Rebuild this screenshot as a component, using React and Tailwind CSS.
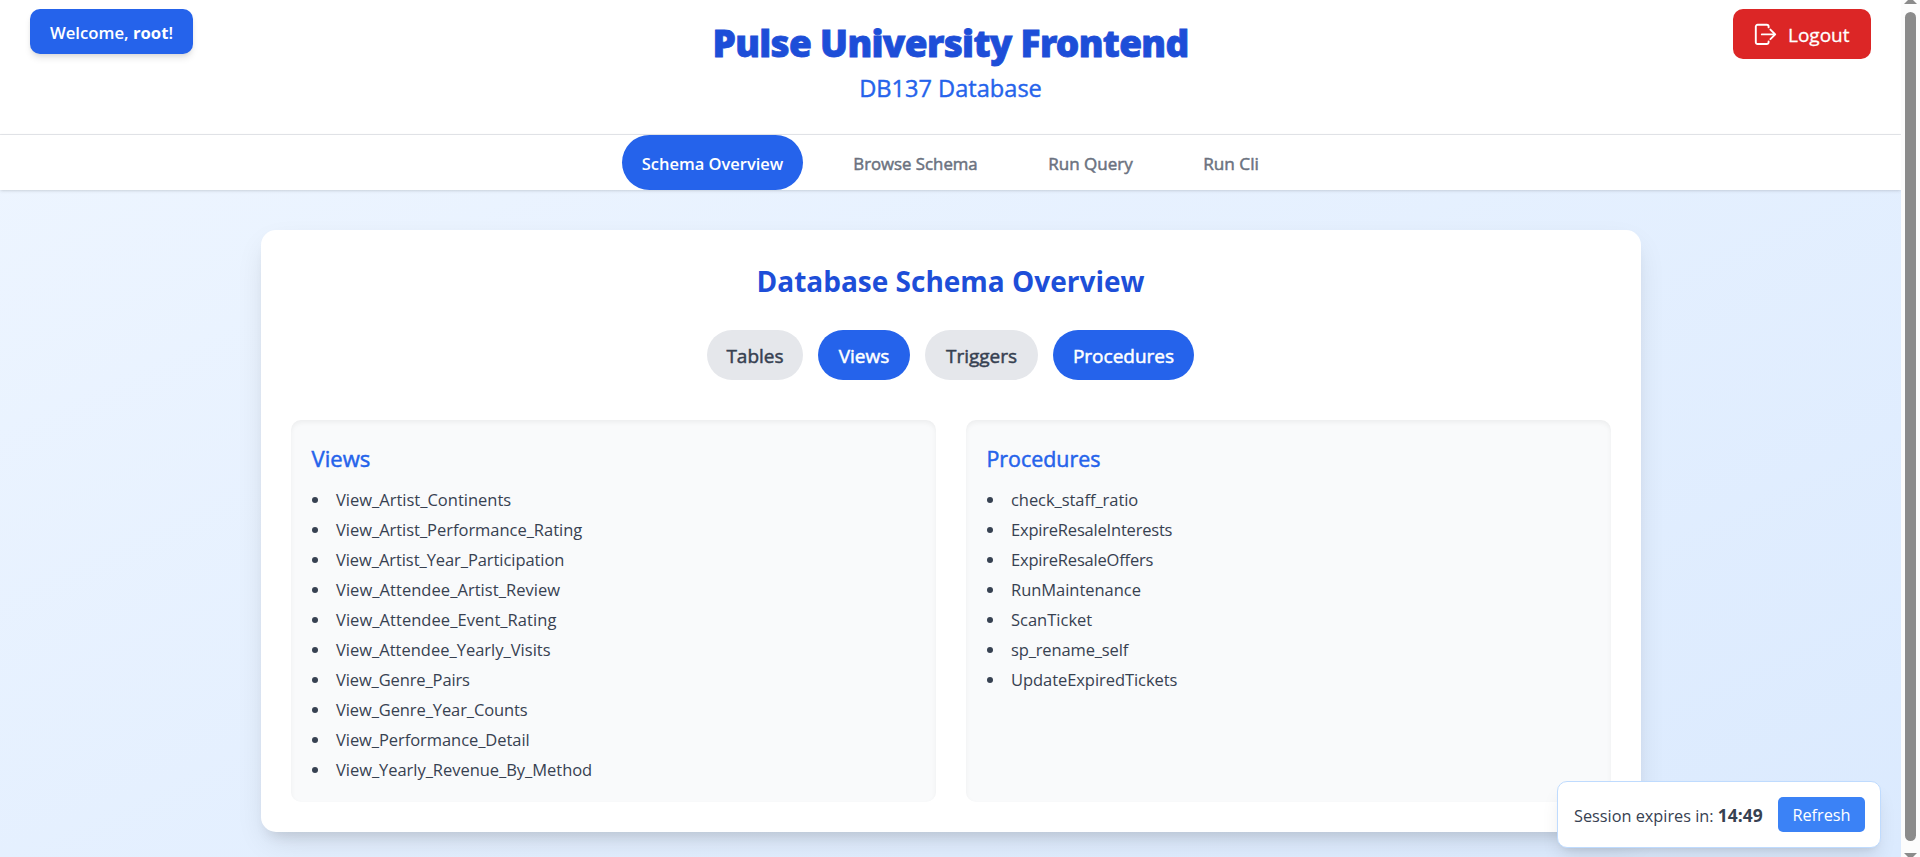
const views = [
  { name: 'View_Artist_Continents' },
  { name: 'View_Artist_Performance_Rating', fit: 'tracking-[-0.03px]' },
  { name: 'View_Artist_Year_Participation', fit: 'tracking-[-0.07px]' },
  { name: 'View_Attendee_Artist_Review', fit: 'tracking-[0.05px]' },
  { name: 'View_Attendee_Event_Rating', fit: 'tracking-[0.05px]' },
  { name: 'View_Attendee_Yearly_Visits' },
  { name: 'View_Genre_Pairs', fit: 'tracking-[-0.12px]' },
  { name: 'View_Genre_Year_Counts', fit: 'tracking-[-0.1px]' },
  { name: 'View_Performance_Detail', fit: 'tracking-[-0.06px]' },
  { name: 'View_Yearly_Revenue_By_Method', fit: 'tracking-[-0.04px]' },
];

const procedures = [
  { name: 'check_staff_ratio', fit: 'tracking-[-0.06px]' },
  { name: 'ExpireResaleInterests', fit: 'tracking-[-0.2px]' },
  { name: 'ExpireResaleOffers', fit: 'tracking-[-0.2px]' },
  { name: 'RunMaintenance', fit: 'tracking-[-0.04px]' },
  { name: 'ScanTicket' },
  { name: 'sp_rename_self', fit: 'tracking-[-0.14px]' },
  { name: 'UpdateExpiredTickets', fit: 'tracking-[-0.06px]' },
];

function LogoutIcon() {
  return (
    <svg className="mt-[1px]" width="25" height="25" viewBox="0 0 25 25" fill="none" stroke="currentColor" strokeWidth="1.9" strokeLinecap="round" strokeLinejoin="round">
      <path d="M15.6 5.4V4.6a1.8 1.8 0 0 0-1.8-1.8H4.6a1.8 1.8 0 0 0-1.8 1.8v15.6A1.8 1.8 0 0 0 4.6 22h9.2a1.8 1.8 0 0 0 1.8-1.8v-.8" />
      <path d="M8.8 12.4h13.2M17.4 7.6l4.8 4.8-4.8 4.8" />
    </svg>
  );
}

function NavTab({ children, className }) {
  return (
    <button className={`flex h-[55px] items-center justify-center rounded-full whitespace-nowrap ${className}`}>
      {children}
    </button>
  );
}

function Pill({ children, active, className }) {
  const tone = active ? 'bg-[#2563eb] text-white' : 'bg-[#e5e7eb] text-[#374151]';
  return (
    <button className={`flex h-[50px] items-center justify-center rounded-full pt-[2px] text-[19px] [-webkit-text-stroke:0.5px] ${tone} ${className}`}>
      {children}
    </button>
  );
}

function Panel({ title, items, titleClass }) {
  return (
    <section className="flex-1 rounded-[10px] bg-[#f9fafb] p-5 shadow-[inset_0_2.5px_5px_0_rgba(0,0,0,0.05)]">
      <h3 className={`ml-[1px] h-[35px] text-[#2563eb] [-webkit-text-stroke:0.5px] ${titleClass}`}>{title}</h3>
      <ul className="mt-[12px] flex flex-col gap-[3.75px] text-[16.5px] text-[#374151]">
        {items.map(({ name, fit = '' }) => (
          <li key={name} className="flex h-[26.25px] items-center">
            <span className="mr-[18.5px] ml-[1px] h-[6px] w-[6px] rounded-full bg-[#374151]" />
            <span className={fit}>{name}</span>
          </li>
        ))}
      </ul>
    </section>
  );
}

export default function App() {
  return (
    <div className="relative flex h-[857px] w-[1920px] overflow-hidden font-['Open_Sans','Noto_Sans',sans-serif]">
      <main className="flex w-[1901px] flex-col overflow-hidden bg-linear-to-br from-[#eff6ff] to-[#dbeafe]">
        <header className="flex h-[135px] shrink-0 flex-col items-center border-b border-[#e5e7eb] bg-white pt-5">
          <h1 className="h-[45px] text-[37px] leading-[45px] font-black tracking-[-0.68px] text-[#1d4ed8] font-['Noto_Sans',sans-serif] [-webkit-text-stroke:0.8px]">Pulse University Frontend</h1>
          <p className="mt-[5px] h-[35px] text-[23.6px] leading-[37px] text-[#2563eb] [-webkit-text-stroke:0.4px]">DB137 Database</p>
        </header>
        <nav className="flex h-[55px] shrink-0 justify-center gap-[30px] bg-white shadow-[0_1.25px_3.75px_0_rgba(0,0,0,0.1),0_1.25px_2.5px_-1px_rgba(0,0,0,0.1)]">
          <NavTab className="w-[181px] bg-[#2563eb] pt-[3px] text-[16.5px] font-semibold text-white">Schema Overview</NavTab>
          <NavTab className="w-[165px] pt-[2px] text-[16.8px] text-[#6b7280] [-webkit-text-stroke:0.5px]">Browse Schema</NavTab>
          <NavTab className="w-[125px] pt-[2px] text-[17px] text-[#6b7280] [-webkit-text-stroke:0.5px]">Run Query</NavTab>
          <NavTab className="w-[96px] pt-[2px] text-[17.2px] text-[#6b7280] [-webkit-text-stroke:0.5px]">Run Cli</NavTab>
        </nav>
        <div className="mt-10 flex h-[602px] w-[1380px] shrink-0 flex-col self-center rounded-[15px] bg-white p-[30px] shadow-[0_12.5px_31.25px_-6.25px_rgba(0,0,0,0.12),0_10px_12.5px_-7.5px_rgba(0,0,0,0.1)]">
          <h2 className="h-10 text-center text-[28px] leading-[42px] font-bold text-[#1d4ed8]">Database Schema Overview</h2>
          <div className="mt-[30px] flex justify-center gap-[15px]">
            <Pill className="w-[96px]">Tables</Pill>
            <Pill active className="w-[92px]">Views</Pill>
            <Pill className="w-[113px]">Triggers</Pill>
            <Pill active className="w-[141px]">Procedures</Pill>
          </div>
          <div className="mt-10 flex h-[382px] gap-[30px]">
            <Panel title="Views" items={views} titleClass="text-[22.1px] leading-[36px]" />
            <Panel title="Procedures" items={procedures} titleClass="text-[21.4px] leading-[38px]" />
          </div>
        </div>
      </main>

      <aside className="flex w-[19px] flex-col items-center justify-between bg-[#fcfcfc]">
        <svg width="13" height="4" viewBox="0 0 13 4"><path d="M0 4L4 0h5l4 4z" fill="#8b8b8b" /></svg>
        <div className="mt-[8px] mb-[12px] w-[11px] flex-1 rounded-full bg-[#8b8b8b]" />
        <svg width="13" height="4" viewBox="0 0 13 4"><path d="M0 0h13L9 4H4z" fill="#8b8b8b" /></svg>
      </aside>

      <div className="absolute top-[9px] left-[30px] flex h-[45px] w-[163px] items-center justify-center rounded-[10px] bg-[#2563eb] pt-[3px] text-[16.7px] font-semibold text-white shadow-[0_5px_7.5px_-1.25px_rgba(0,0,0,0.1),0_2.5px_5px_-2.5px_rgba(0,0,0,0.1)]">
        <span className="whitespace-pre">Welcome, <b className="font-bold">root</b>!</span>
      </div>

      <button className="absolute top-[9px] left-[1733px] flex h-[50px] w-[138px] items-center rounded-[10px] bg-[#dc2626] pl-5 text-[19px] text-white [-webkit-text-stroke:0.3px]">
        <LogoutIcon />
        <span className="ml-[10px] pt-[2px]">Logout</span>
      </button>

      <div className="absolute top-[781px] left-[1557px] flex h-[67px] w-[324px] items-center rounded-[10px] border border-[#bfdbfe] bg-white pr-[15px] pl-[16px] text-[16.3px] text-[#374151] shadow-[0_12.5px_18.75px_-3.75px_rgba(0,0,0,0.1),0_5px_7.5px_-5px_rgba(0,0,0,0.1)]">
        <span className="pt-[1px] whitespace-pre">Session expires in: <b className="text-[17.4px] font-bold">14:49</b></span>
        <button className="ml-auto flex h-[35px] w-[87px] items-center justify-center rounded-[5px] bg-[#3b82f6] pt-[2px] text-white">Refresh</button>
      </div>
    </div>
  );
}
